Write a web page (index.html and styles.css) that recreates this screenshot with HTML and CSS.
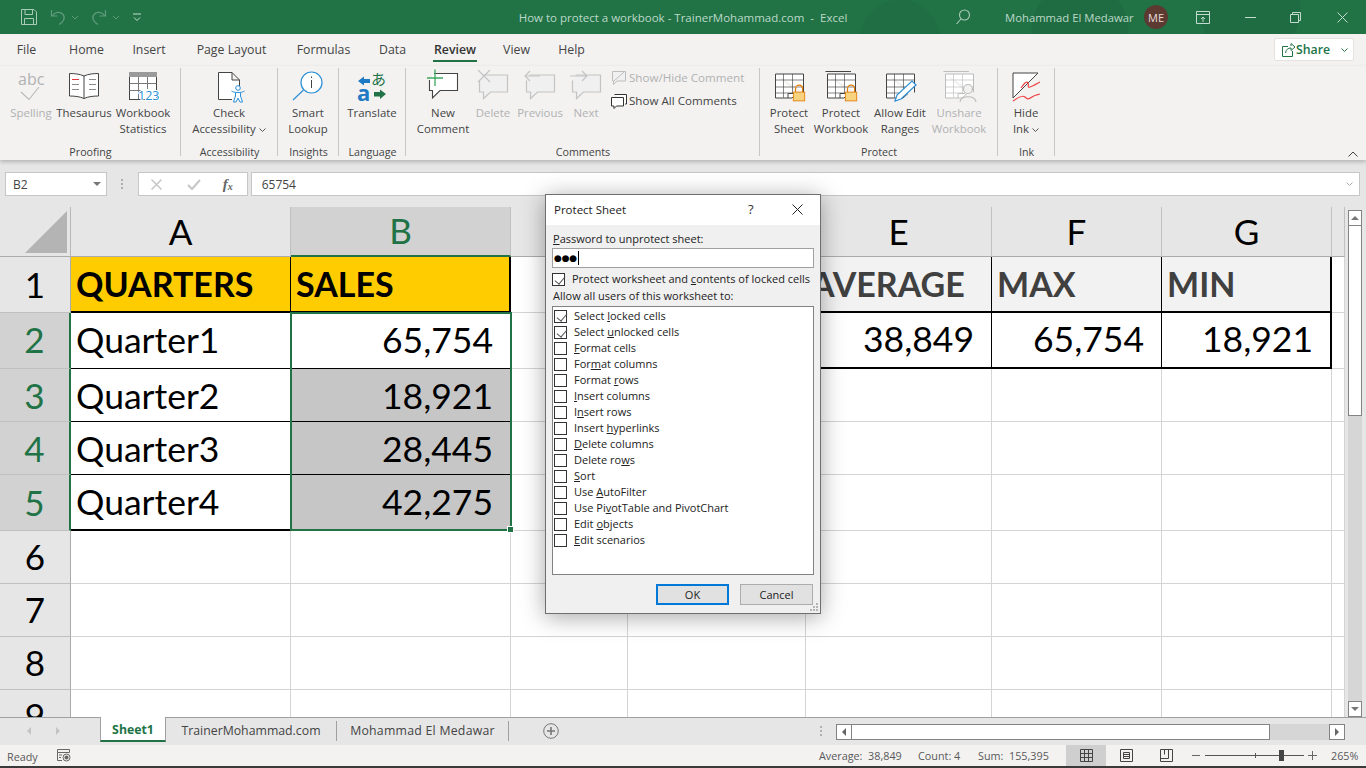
FILE: index.html
```html
<!DOCTYPE html>
<html lang="en">
<head>
<meta charset="utf-8">
<title>How to protect a workbook - TrainerMohammad.com - Excel</title>
<link rel="stylesheet" href="styles.css">
</head>
<body>
<svg class="defs" width="0" height="0">
  <symbol id="ws" viewBox="0 0 36 36">
    <path d="M4.500 5.500H32.500V24M4.500 5.500V29.500H21L26 25" fill="#fff" stroke="currentColor"/>
    <path d="M4.500 11.500H32.500M4.500 18.500H32.500M4.500 24.500H22M12.500 5.500V29M21.500 5.500V25" fill="none" stroke="currentColor" opacity=".65"/>
    <path d="M17 29.500V25H24" fill="none" stroke="currentColor"/>
  </symbol>
  <symbol id="lock" viewBox="0 0 16 22">
    <path d="M4 10V6a4 4 0 0 1 8 0v4" fill="none" stroke="#e47d08" stroke-width="1.300"/>
    <rect x="1.500" y="10" width="13" height="10" fill="#f8d37f" stroke="#e47d08"/>
  </symbol>
  <symbol id="bub" viewBox="0 0 36 36">
    <path d="M7.500 6.500H32.500V23.500H15.500L8.500 30V23.500H4.500V12" fill="#f0f0f0" stroke="#c4c4c4" stroke-width="1.200"/>
  </symbol>
</svg>

<header class="titlebar">
  <div class="qat">
    <svg width="18" height="18" viewBox="0 0 18 18" class="qat-save"><path d="M1.500 1.500H14L16.500 4V16.500H1.500ZM5 1.500V6.500H12.500V1.500M4.500 16.500V10.500H13.500V16.500" fill="none" stroke="#a9cbb7"/></svg>
    <svg width="16" height="18" viewBox="0 0 16 18" class="qat-undo"><path d="M1.500 2V8H7.500M2 8C5 4 10 3 13 6.500S13 14.500 9 16.500" fill="none" stroke="#5f9b7b" stroke-width="1.200"/></svg>
    <svg width="8" height="5" viewBox="0 0 8 5" class="qat-chev"><path d="M1 1L4 4L7 1" fill="none" stroke="#5f9b7b"/></svg>
    <svg width="16" height="18" viewBox="0 0 16 18" class="qat-redo"><path d="M14.500 2V8H8.500M14 8C11 4 6 3 3 6.500S3 14.500 7 16.500" fill="none" stroke="#5f9b7b" stroke-width="1.200"/></svg>
    <svg width="8" height="5" viewBox="0 0 8 5" class="qat-chev"><path d="M1 1L4 4L7 1" fill="none" stroke="#5f9b7b"/></svg>
    <svg width="8" height="8" viewBox="0 0 8 8" class="qat-more"><path d="M0 1H8M1 4.500L4 7.500L7 4.500" fill="none" stroke="#c4dccf"/></svg>
  </div>
  <div class="doc-title">How to protect a workbook - TrainerMohammad.com&nbsp; - &nbsp;Excel</div>
  <div class="winbar">
    <svg width="16" height="18" viewBox="0 0 16 18" class="win-search"><circle cx="9.500" cy="7" r="5" fill="none" stroke="#a9cbb7" stroke-width="1.100"/><path d="M6 11L1.500 16" stroke="#a9cbb7" stroke-width="1.100"/></svg>
    <span class="user">Mohammad El Medawar</span>
    <span class="avatar">ME</span>
    <svg width="14" height="13" viewBox="0 0 14 13" class="win-display"><path d="M.5 .5H13.500V12.500H.5ZM.5 3.500H13.500M7 11V6M5 8L7 6L9 8" fill="none" stroke="#c4dccf"/></svg>
    <svg width="11" height="1" viewBox="0 0 11 1" class="win-min"><path d="M0 .5H11" stroke="#c4dccf"/></svg>
    <svg width="11" height="11" viewBox="0 0 11 11" class="win-max"><path d="M.5 2.500H8.500V10.500H.5ZM2.500 2.500V.5H10.500V8.500H8.500" fill="none" stroke="#c4dccf"/></svg>
    <svg width="11" height="11" viewBox="0 0 11 11" class="win-close"><path d="M.5 .5L10.500 10.500M10.500 .5L.5 10.500" stroke="#c4dccf"/></svg>
  </div>
</header>

<nav class="tabs">
  <span class="tab t-file">File</span>
  <span class="tab t-home">Home</span>
  <span class="tab t-insert">Insert</span>
  <span class="tab t-page">Page Layout</span>
  <span class="tab t-formulas">Formulas</span>
  <span class="tab t-data">Data</span>
  <span class="tab t-review"><b>Review</b></span>
  <span class="tab t-view">View</span>
  <span class="tab t-help">Help</span>
  <span class="share">
    <svg width="16" height="16" viewBox="0 0 16 16"><path d="M8 4.500H2.500V14.500H12.500V9M5.500 11C6 7.500 8 6 11 6V8.500L15 5L11 1.500V4" fill="none" stroke="#217346" stroke-width="1"/></svg>
    <b>Share</b>
    <svg width="7" height="4" viewBox="0 0 7 4" class="share-chev"><path d="M.5 .5L3.500 3.500L6.500 .5" fill="none" stroke="#217346"/></svg>
  </span>
</nav>

<section class="ribbon">
  <div class="group g-proof">
    <div class="btns">
      <div class="btn w52 off">
        <svg class="ico" width="36" height="37" viewBox="0 0 36 37"><text x="5" y="17" class="abc">abc</text><path d="M8 24L16 31.500L26 19" fill="none" stroke="#b9b9b9" stroke-width="1.100"/></svg>
        <span>Spelling</span>
      </div>
      <div class="btn w54">
        <svg class="ico" width="36" height="37" viewBox="0 0 36 37"><path d="M18 8C14 6 8 5.500 3.500 5.500V28C8 28 14 28.500 18 30.500C22 28.500 28 28 32.500 28V5.500C28 5.500 22 6 18 8ZM18 8V30.500" fill="#fff" stroke="#444"/><path d="M6 11.500H13" stroke="#e8343c"/><path d="M6 16.500H13M6 21.500H13M23 11.500H30M23 16.500H30M23 21.500H30" stroke="#8a8a8a"/></svg>
        <span>Thesaurus</span>
      </div>
      <div class="btn w64">
        <svg class="ico" width="36" height="37" viewBox="0 0 36 37"><rect x="4.500" y="4.500" width="27" height="27" fill="#fff" stroke="#444"/><rect x="4" y="4" width="28" height="5" fill="#9a9a9a"/><path d="M4.500 15.500H31.500M4.500 22.500H16M13.500 9V31M22.500 9V21" fill="none" stroke="#777"/><text x="13" y="32" class="n123">123</text></svg>
        <span>Workbook<br>Statistics</span>
      </div>
    </div>
    <div class="glabel">Proofing</div>
  </div>
  <div class="group g-access">
    <div class="btns">
      <div class="btn w96">
        <svg class="ico" width="36" height="37" viewBox="0 0 36 37"><path d="M21 31.500H7.500V4.500H21L28.500 12V18M21 4.500V12H28.500" fill="#fff" stroke="#444"/><circle cx="27" cy="20" r="2.300" fill="#fff" stroke="#2b8fd6"/><path d="M20.500 23C23 25 31 25 33.500 23M24.500 25V28L22.500 34H25L27 30L29 34H31.500L29.500 28V25" fill="#fff" stroke="#2b8fd6"/></svg>
        <span>Check<br>Accessibility<svg class="chev" width="7" height="4" viewBox="0 0 7 4"><path d="M.5 .5L3.500 3.500L6.500 .5" fill="none" stroke="#555"/></svg></span>
      </div>
    </div>
    <div class="glabel">Accessibility</div>
  </div>
  <div class="group g-insight">
    <div class="btns">
      <div class="btn w60">
        <svg class="ico" width="36" height="37" viewBox="0 0 36 37"><circle cx="21.500" cy="14.500" r="10.500" fill="#fff" stroke="#2b8fd6" stroke-width="1.200"/><path d="M13.500 22L3 32" stroke="#2b8fd6" stroke-width="1.200"/><path d="M21.500 12V20M21.500 8.500V10" stroke="#444"/></svg>
        <span>Smart<br>Lookup</span>
      </div>
    </div>
    <div class="glabel">Insights</div>
  </div>
  <div class="group g-lang">
    <div class="btns">
      <div class="btn w66">
        <svg class="ico" width="36" height="37" viewBox="0 0 36 37"><path d="M4 13L10 8.500V11H16V15H10V17.500Z" fill="#1e7ac4"/><path d="M20 24H26V21.500L32 26L26 31V28.500H20Z" fill="#217346"/><text x="17" y="17" class="jp">あ</text><text x="3" y="32.500" class="aa">a</text></svg>
        <span>Translate</span>
      </div>
    </div>
    <div class="glabel">Language</div>
  </div>
  <div class="group g-comm">
    <div class="btns">
      <div class="btn w46">
        <svg class="ico" width="36" height="37" viewBox="0 0 36 37"><path d="M9 5.500H32.500V22.500H15L7.500 30V22.500H4.500V12" fill="#fff" stroke="#444" stroke-width="1.100"/><path d="M10 1.500V18M2 10H18" stroke="#3fa65f" stroke-width="1.300"/></svg>
        <span>New<br>Comment</span>
      </div>
      <div class="btn w46 ml4 off">
        <svg class="ico" width="36" height="37" viewBox="0 0 36 37"><use href="#bub"/><path d="M3 2L15 14M15 2L3 14" stroke="#c4c4c4" stroke-width="1.200"/></svg>
        <span>Delete</span>
      </div>
      <div class="btn w46 ml1 off">
        <svg class="ico" width="36" height="37" viewBox="0 0 36 37"><use href="#bub"/><path d="M18 8H3M8 3L3 8L8 13" fill="none" stroke="#c4c4c4" stroke-width="1.200"/></svg>
        <span>Previous</span>
      </div>
      <div class="btn w46 off">
        <svg class="ico" width="36" height="37" viewBox="0 0 36 37"><use href="#bub"/><path d="M2 8H19M14 3L19 8L14 13" fill="none" stroke="#c4c4c4" stroke-width="1.200"/></svg>
        <span>Next</span>
      </div>
      <div class="stack">
        <div class="small off">
          <svg width="17" height="16" viewBox="0 0 17 16"><path d="M1.500 1.500H14.500V11H6L2.500 14.500V11H1.500ZM3 11L13 2" fill="#f0f0f0" stroke="#bdbdbd"/></svg>
          <span>Show/Hide Comment</span>
        </div>
        <div class="small">
          <svg width="17" height="16" viewBox="0 0 17 16"><path d="M3.500 1.500H15.500V11H14M.5 4.500H12.500V13H5.500L3 15.500V13H.5Z" fill="#fff" stroke="#333"/></svg>
          <span>Show All Comments</span>
        </div>
      </div>
    </div>
    <div class="glabel">Comments</div>
  </div>
  <div class="group g-prot">
    <div class="btns">
      <div class="btn w50">
        <svg class="ico" width="36" height="37" viewBox="0 0 36 37"><use href="#ws" class="c-dark"/><use href="#lock" x="21" y="15" width="14" height="20"/></svg>
        <span>Protect<br>Sheet</span>
      </div>
      <div class="btn w54">
        <svg class="ico" width="36" height="37" viewBox="0 0 36 37"><path d="M2.500 3.500H28" fill="none" stroke="#444"/><use href="#ws" class="c-dark"/><use href="#lock" x="21" y="15" width="14" height="20"/></svg>
        <span>Protect<br>Workbook</span>
      </div>
      <div class="btn w64">
        <svg class="ico" width="36" height="37" viewBox="0 0 36 37"><use href="#ws" class="c-dark"/><path d="M13 33L15 27L30 13L34 17L19 31Z" fill="#fff" stroke="#2b8fd6" stroke-width="1.200"/></svg>
        <span>Allow Edit<br>Ranges</span>
      </div>
      <div class="btn w54 off">
        <svg class="ico" width="36" height="37" viewBox="0 0 36 37"><path d="M2.500 3.500H28" fill="none" stroke="#bdbdbd"/><use href="#ws" class="c-off"/><circle cx="27" cy="21" r="4.500" fill="#f2f1f0" stroke="#bdbdbd" stroke-width="1.200"/><path d="M19 34C19 27 35 27 35 34" fill="#f2f1f0" stroke="#bdbdbd" stroke-width="1.200"/></svg>
        <span>Unshare<br>Workbook</span>
      </div>
    </div>
    <div class="glabel">Protect</div>
  </div>
  <div class="group g-ink">
    <div class="btns">
      <div class="btn w56">
        <svg class="ico" width="36" height="37" viewBox="0 0 36 37"><path d="M5 30V5H30L5 30" fill="#fff" stroke="#444"/><path d="M13 20C17 14 19 13 20 15S19 20 22 19 30 15 32 14M5 33C12 28 15 27 17 29S20 32 24 29 30 27 32 26" fill="none" stroke="#ee4444" stroke-width="1.200"/></svg>
        <span>Hide<br>Ink<svg class="chev" width="7" height="4" viewBox="0 0 7 4"><path d="M.5 .5L3.500 3.500L6.500 .5" fill="none" stroke="#555"/></svg></span>
      </div>
    </div>
    <div class="glabel">Ink</div>
  </div>
  <svg class="collapse" width="10" height="6" viewBox="0 0 10 6"><path d="M.5 5.500L5 1L9.500 5.500" fill="none" stroke="#444"/></svg>
</section>

<div class="fbar">
  <div class="namebox"><span>B2</span><svg width="8" height="4" viewBox="0 0 8 4"><path d="M0 0H8L4 4Z" fill="#777"/></svg></div>
  <div class="fdots"><i></i><i></i><i></i></div>
  <div class="fbtns">
    <svg width="11" height="11" viewBox="0 0 11 11"><path d="M.5 .5L10.500 10.500M10.500 .5L.5 10.500" stroke="#c6c6c6" stroke-width="1.500"/></svg>
    <svg width="14" height="11" viewBox="0 0 14 11"><path d="M1 6L5 10L13 1" fill="none" stroke="#c6c6c6" stroke-width="2"/></svg>
    <span class="fx">f<sub>x</sub></span>
  </div>
  <div class="finput">65754<svg width="7" height="4" viewBox="0 0 7 4"><path d="M.5 .5L3.500 3.500L6.500 .5" fill="none" stroke="#aaa"/></svg></div>
</div>

<main class="sheetwrap">
  <div class="grid">
    <div class="corner"><svg width="42" height="42" viewBox="0 0 42 42"><path d="M42 0V42H0Z" fill="#b4b4b4"/></svg></div>
    <div class="ch">A</div><div class="ch sel">B</div><div class="ch"></div><div class="ch"></div><div class="ch">E</div><div class="ch">F</div><div class="ch">G</div><div class="ch"></div>

    <div class="rh">1</div><div class="c hd gold">QUARTERS</div><div class="c hd gold rb">SALES</div><div class="c"></div><div class="c"></div><div class="c hd pale">AVERAGE</div><div class="c hd pale">MAX</div><div class="c hd pale rb">MIN</div><div class="c"></div>

    <div class="rh sel up">2</div><div class="c tx ln up">Quarter1</div><div class="c num ln up">65,754</div><div class="c"></div><div class="c"></div><div class="c num thick up">38,849</div><div class="c num thick up">65,754</div><div class="c num thick rb up">18,921</div><div class="c"></div>

    <div class="rh sel down">3</div><div class="c tx ln down">Quarter2</div><div class="c num ln grey down">18,921</div><div class="c"></div><div class="c"></div><div class="c"></div><div class="c"></div><div class="c"></div><div class="c"></div>

    <div class="rh sel down">4</div><div class="c tx ln down">Quarter3</div><div class="c num ln grey down">28,445</div><div class="c"></div><div class="c"></div><div class="c"></div><div class="c"></div><div class="c"></div><div class="c"></div>

    <div class="rh sel">5</div><div class="c tx ln thick">Quarter4</div><div class="c num ln thick grey">42,275</div><div class="c"></div><div class="c"></div><div class="c"></div><div class="c"></div><div class="c"></div><div class="c"></div>

    <div class="rh">6</div><div class="c"></div><div class="c"></div><div class="c"></div><div class="c"></div><div class="c"></div><div class="c"></div><div class="c"></div><div class="c"></div>
    <div class="rh">7</div><div class="c"></div><div class="c"></div><div class="c"></div><div class="c"></div><div class="c"></div><div class="c"></div><div class="c"></div><div class="c"></div>
    <div class="rh">8</div><div class="c"></div><div class="c"></div><div class="c"></div><div class="c"></div><div class="c"></div><div class="c"></div><div class="c"></div><div class="c"></div>
    <div class="rh">9</div><div class="c"></div><div class="c"></div><div class="c"></div><div class="c"></div><div class="c"></div><div class="c"></div><div class="c"></div><div class="c"></div>

    <div class="selection"><span class="handle"></span></div>
  </div>
  <div class="vscroll">
    <div class="vbtn"><svg width="8" height="4" viewBox="0 0 8 4"><path d="M0 4H8L4 0Z" fill="#777"/></svg></div>
    <div class="vthumb"></div>
    <div class="vtrack"></div>
    <div class="vbtn"><svg width="8" height="4" viewBox="0 0 8 4"><path d="M0 0H8L4 4Z" fill="#777"/></svg></div>
  </div>
</main>

<div class="sheetbar">
  <div class="navs">
    <svg width="4" height="8" viewBox="0 0 4 8"><path d="M4 0V8L0 4Z" fill="#c4c4c4"/></svg>
    <svg width="4" height="8" viewBox="0 0 4 8"><path d="M0 0V8L4 4Z" fill="#c4c4c4"/></svg>
  </div>
  <div class="stab active">Sheet1</div>
  <div class="stab s2">TrainerMohammad.com</div>
  <div class="stab s3">Mohammad El Medawar</div>
  <svg class="plus" width="16" height="16" viewBox="0 0 16 16"><circle cx="8" cy="8" r="7.300" fill="none" stroke="#777"/><path d="M8 4V12M4 8H12" stroke="#777" stroke-width="1.600"/></svg>
  <div class="hdots"><i></i><i></i><i></i></div>
  <div class="hscroll">
    <div class="hbtn"><svg width="4" height="8" viewBox="0 0 4 8"><path d="M4 0V8L0 4Z" fill="#666"/></svg></div>
    <div class="hthumb"></div>
    <div class="htrack"></div>
    <div class="hbtn"><svg width="4" height="8" viewBox="0 0 4 8"><path d="M0 0V8L4 4Z" fill="#666"/></svg></div>
  </div>
</div>

<footer class="status">
  <span class="ready">Ready</span>
  <svg class="macro" width="14" height="13" viewBox="0 0 14 13"><path d="M.5 .5H12.500V3.500H.5ZM.5 3.500V11.500H5M2 6H5M2 8.500H4" fill="none" stroke="#666"/><circle cx="9.500" cy="8.500" r="3.500" fill="none" stroke="#666"/><circle cx="9.500" cy="8.500" r="2" fill="#666"/></svg>
  <span class="stat s-avg">Average:&nbsp; 38,849</span>
  <span class="stat s-count">Count: 4</span>
  <span class="stat s-sum">Sum:&nbsp; 155,395</span>
  <span class="view on"><svg width="13" height="13" viewBox="0 0 13 13"><path d="M.5 .5H12.500V12.500H.5ZM.5 4.500H12.500M.5 8.500H12.500M4.500 .5V12.500M8.500 .5V12.500" fill="none" stroke="#444"/></svg></span>
  <span class="view"><svg width="13" height="13" viewBox="0 0 13 13"><path d="M.5 .5H12.500V12.500H.5ZM3.500 3.500H9.500V9.500H3.500ZM3.500 5.500H9.500M3.500 7.500H9.500" fill="none" stroke="#444"/></svg></span>
  <span class="view"><svg width="13" height="13" viewBox="0 0 13 13"><path d="M.5 .5H12.500V12.500H.5ZM.5 9.500H8.500V.5M4.500 .5V5.500" fill="none" stroke="#444"/></svg></span>
  <div class="zoomer">
    <i class="zm"></i>
    <div class="zline"><i class="ztick"></i><i class="zthumb"></i></div>
    <i class="zp"></i>
  </div>
  <span class="pct">265%</span>
</footer>
<div class="bottomline"></div>

<div class="dialog">
  <div class="dtitle">
    <span class="dname">Protect Sheet</span>
    <span class="dq">?</span>
    <svg width="11" height="11" viewBox="0 0 11 11"><path d="M.5 .5L10.500 10.500M10.500 .5L.5 10.500" stroke="#222"/></svg>
  </div>
  <div class="dbody">
    <div class="dlabel"><u>P</u>assword to unprotect sheet:</div>
    <div class="pw">●●●<i></i></div>
    <div class="opt top"><span class="cb ck"></span><span class="otext">Protect worksheet and <u>c</u>ontents of locked cells</span></div>
    <div class="dlabel allow">Allow all users of this worksheet to:</div>
    <div class="list">
      <div class="opt"><span class="cb ck"></span><span class="otext">Select <u>l</u>ocked cells</span></div>
      <div class="opt"><span class="cb ck"></span><span class="otext">Select <u>u</u>nlocked cells</span></div>
      <div class="opt"><span class="cb"></span><span class="otext"><u>F</u>ormat cells</span></div>
      <div class="opt"><span class="cb"></span><span class="otext">For<u>m</u>at columns</span></div>
      <div class="opt"><span class="cb"></span><span class="otext">Format <u>r</u>ows</span></div>
      <div class="opt"><span class="cb"></span><span class="otext"><u>I</u>nsert columns</span></div>
      <div class="opt"><span class="cb"></span><span class="otext">I<u>n</u>sert rows</span></div>
      <div class="opt"><span class="cb"></span><span class="otext">Insert <u>h</u>yperlinks</span></div>
      <div class="opt"><span class="cb"></span><span class="otext"><u>D</u>elete columns</span></div>
      <div class="opt"><span class="cb"></span><span class="otext">Delete ro<u>w</u>s</span></div>
      <div class="opt"><span class="cb"></span><span class="otext"><u>S</u>ort</span></div>
      <div class="opt"><span class="cb"></span><span class="otext">Use <u>A</u>utoFilter</span></div>
      <div class="opt"><span class="cb"></span><span class="otext">Use Pi<u>v</u>otTable and PivotChart</span></div>
      <div class="opt"><span class="cb"></span><span class="otext">Edit <u>o</u>bjects</span></div>
      <div class="opt"><span class="cb"></span><span class="otext"><u>E</u>dit scenarios</span></div>
    </div>
    <div class="dfoot">
      <button class="dbtn ok">OK</button>
      <button class="dbtn">Cancel</button>
    </div>
    <svg class="grip" width="9" height="9" viewBox="0 0 9 9"><path d="M6 0h2v2H6zM3 3h2v2H3zM6 3h2v2H6zM0 6h2v2H0zM3 6h2v2H3zM6 6h2v2H6z" fill="#b5b5b5"/></svg>
  </div>
</div>
</body>
</html>
```
FILE: styles.css
```css
* { box-sizing: border-box; }
html, body { margin: 0; height: 100%; }
body {
  width: 1366px; height: 768px; overflow: hidden; position: relative;
  display: flex; flex-direction: column;
  font-family: "Open Sans", "Noto Sans", sans-serif;
  background: #e6e6e6; color: #444;
}
.defs { position: absolute; }
svg { display: block; flex: none; }
.c-dark { color: #444; }
.c-off { color: #bdbdbd; }

/* title bar */
.titlebar {
  height: 34px; flex: none; display: grid; grid-template-columns: 1fr auto 1fr; align-items: center;
  background-color: #217346;
  background-image:
    radial-gradient(circle at 900px 40px, #206f44 40px, transparent 41px),
    radial-gradient(circle at 1080px 30px, #1f6c42 48px, transparent 49px),
    radial-gradient(circle at 1250px 10px, #1f6c42 50px, transparent 51px);
  color: #bcd8c8;
}
.qat { display: flex; align-items: center; padding-left: 20px; }
.qat-undo { margin-left: 12px; }
.qat-chev { margin-left: 5px; }
.qat-redo { margin-left: 12px; }
.qat-more { margin-left: 13px; }
.doc-title { font-size: 11.500px; white-space: nowrap; }
.winbar { display: flex; align-items: center; justify-content: flex-end; font-size: 11.500px; padding-right: 18px; }
.user { margin-left: 34px; white-space: nowrap; color: #bcd8c8; width: 128px; font-size: 11.300px; }
.avatar {
  width: 24px; height: 24px; border-radius: 50%; background: #5c3a32; color: #e6dcd9;
  display: flex; align-items: center; justify-content: center; font-size: 11px; margin-left: 11px;
}
.win-display { margin-left: 28px; }
.win-min { margin-left: 35px; }
.win-max { margin-left: 34px; }
.win-close { margin-left: 36px; }

/* tabs */
.tabs { height: 32px; flex: none; display: flex; background: #f3f2f1; position: relative; font-size: 12.300px; }
.tab { display: flex; justify-content: center; padding-top: 7px; white-space: nowrap; position: relative; }
.tab b { font-weight: 600; color: #333; border-bottom: 2px solid #217346; height: 21px; padding: 0 1px; font-size: 12.300px; }
.t-file { width: 53px; } .t-home { width: 67px; } .t-insert { width: 58px; }
.t-page { width: 107px; } .t-formulas { width: 77px; } .t-data { width: 61px; }
.t-review { width: 64px; } .t-view { width: 59px; } .t-help { width: 51px; }
.share {
  margin: 4px 0 0 677px; width: 80px; height: 23px; background: #fff; border: 1px solid #e4e3e2; border-radius: 2px;
  display: flex; align-items: center; padding-left: 5px; color: #217346; font-size: 12.300px;
}
.share b { font-weight: 600; }
.share-chev { margin-left: 11px; }

/* ribbon */
.ribbon {
  height: 94px; flex: none; display: flex; background: #f3f2f1; padding-top: 2px; position: relative;
  box-shadow: 0 2px 4px rgba(0,0,0,.22); z-index: 2;
}
.group {
  display: flex; flex-direction: column; height: 92px; flex: none;
  background: linear-gradient(#c6c6c6, #c6c6c6) right top / 1px 88px no-repeat;
}
.g-proof { width: 181px; padding-left: 5px; }
.g-access { width: 97px; }
.g-insight { width: 61px; }
.g-lang { width: 67px; }
.g-comm { width: 354px; padding-left: 14px; }
.g-prot { width: 238px; padding-left: 4px; }
.g-ink { width: 57px; }
.g-proof .glabel { margin-left: -5px; }
.g-comm .glabel { margin-left: -14px; }
.g-prot .glabel { margin-left: -4px; }
.btns { display: flex; height: 76px; }
.btn {
  display: flex; flex-direction: column; align-items: center; text-align: center;
  font-size: 11.400px; line-height: 16px; white-space: nowrap;
}
.btn span { display: block; }
.ico { height: 37px; }
.off { color: #b1b1b1; }
.w46 { width: 46px; } .w50 { width: 50px; } .w52 { width: 52px; } .w54 { width: 54px; } .w56 { width: 56px; }
.w60 { width: 60px; } .w64 { width: 64px; } .w66 { width: 66px; } .w96 { width: 96px; }
.ml4 { margin-left: 4px; } .ml1 { margin-left: 1px; }
.chev { display: inline-block; margin-left: 3px; vertical-align: middle; }
.abc { font-size: 16px; fill: #b1b1b1; font-family: "Open Sans", sans-serif; }
.n123 { font-size: 12.500px; fill: #2b8fd6; font-family: "Open Sans", sans-serif; paint-order: stroke; stroke: #fff; stroke-width: 2px; }
.jp { font-size: 15px; fill: #217346; font-family: "Noto Sans CJK JP", sans-serif; }
.aa { font-size: 22px; fill: #1e7ac4; font-weight: 700; font-family: "Open Sans", sans-serif; }
.stack { display: flex; flex-direction: column; margin: -2px 0 0 2px; }
.small { display: flex; align-items: center; gap: 1px; height: 23px; font-size: 11.600px; white-space: nowrap; }
.glabel { text-align: center; font-size: 10.700px; line-height: 16px; height: 16px; white-space: nowrap; }
.collapse { position: absolute; right: 8px; top: 85px; }

/* formula bar */
.fbar { height: 47px; flex: none; display: flex; padding: 12px 6px 11px 5px; background: #e6e6e6; }
.namebox, .fbtns, .finput { background: #fff; border: 1px solid #c6c6c6; height: 24px; display: flex; align-items: center; }
.namebox { width: 102px; padding: 0 5px 0 7px; justify-content: space-between; font-size: 12px; }
.fdots { width: 31px; display: flex; flex-direction: column; align-items: center; justify-content: center; gap: 2px; }
.fdots i, .hdots i { width: 2px; height: 2px; background: #b0b0b0; display: block; }
.fbtns { width: 110px; padding-left: 12px; gap: 25px; }
.fx { font-family: "Liberation Serif", serif; font-style: italic; font-size: 15px; color: #666; margin-left: -3px; font-weight: 700; }
.fx sub { font-size: 10px; vertical-align: -1px; }
.finput { margin-left: 3px; width: 1111px; padding: 0 6px 0 10px; justify-content: space-between; font-size: 12px; }

/* sheet */
.sheetwrap { height: 510px; flex: none; display: flex; background: #e6e6e6; overflow: hidden; }
.grid {
  width: 1345px; height: 510px; position: relative; overflow: hidden; flex: none;
  display: grid;
  grid-template-columns: 71px 220px 220px 117px 178px 186px 170px 170px 13px;
  grid-template-rows: 50px 56px 56px 53px 53px 56px 53px 53px 53px 53px;
  font-family: Lato, "Open Sans", sans-serif; color: #000; background: #fff;
}
.corner { background: #e6e6e6; border-right: 1px solid #b8b8b8; border-bottom: 1px solid #ababab; display: flex; align-items: flex-end; justify-content: flex-end; padding: 0 3px 3px 0; }
.ch {
  background: #e6e6e6; border-right: 1px solid #c0c0c0; border-bottom: 1px solid #ababab;
  display: flex; align-items: center; justify-content: center; font-size: 35px; padding-bottom: 2px;
}
.ch.sel { background: #d2d2d2; color: #217346; border-bottom: 2px solid #217346; }
.rh {
  background: #e6e6e6; border-right: 1px solid #ababab; border-bottom: 1px solid #c0c0c0;
  display: flex; align-items: center; justify-content: center; font-size: 35px; padding-bottom: 2px;
}
.rh.sel { background: #d2d2d2; color: #217346; border-right: 2px solid #217346; }
.c { border-right: 1px solid #d4d4d4; border-bottom: 1px solid #d4d4d4; display: flex; align-items: center; padding: 0 6px 1px 5px; font-size: 35.500px; white-space: nowrap; min-width: 0; }
.hd { font-weight: 700; font-size: 34px; border-right-color: #000; border-bottom: 2px solid #000; padding-bottom: 2px; }
.gold { background: #ffcc00; }
.pale { background: #f2f2f2; color: #404040; }
.rb { border-right: 2px solid #000; }
.num { justify-content: flex-end; padding-right: 17px; border-right-color: #000; }
.tx { border-right-color: #000; }
.ln { border-bottom-color: #000; }
.thick { border-bottom: 2px solid #000; }
.grey { background: #c6c6c6; }
.c.up { padding-bottom: 3px; }
.rh.up { padding-bottom: 3px; }
.c.down { padding-top: 1px; padding-bottom: 0; }
.rh.down { padding-bottom: 0; }
.selection { position: absolute; left: 290px; top: 105px; width: 222px; height: 219px; border: 2px solid #217346; pointer-events: none; }
.handle { position: absolute; right: -4px; bottom: -4px; width: 7px; height: 7px; background: #217346; border: 1px solid #fff; }

/* vertical scrollbar */
.vscroll { width: 21px; display: flex; flex-direction: column; padding: 3px 4px 0 3px; }
.vbtn { height: 16px; background: #fff; border: 1px solid #838383; display: flex; align-items: center; justify-content: center; flex: none; }
.vthumb { height: 190px; background: #fff; border: 1px solid #838383; border-top: 0; flex: none; }
.vtrack { flex: 1; background: #d6d6d6; }

/* sheet tabs */
.sheetbar { height: 28px; flex: none; position: relative; display: flex; background: #e6e6e6; border-top: 1px solid #a0a0a0; font-size: 12.300px; }
.navs { width: 100px; display: flex; gap: 25px; padding: 9px 0 0 27px; }
.stab { display: flex; align-items: center; justify-content: center; height: 24px; padding-top: 1px; white-space: nowrap; }
.active { width: 66px; height: 25px; background: #fff; color: #217346; font-weight: 700; border-bottom: 2px solid #217346; border-left: 1px solid #a0a0a0; border-right: 1px solid #a0a0a0; margin-top: -1px; font-size: 12.300px; }
.s2 { width: 171px; border-right: 1px solid #a0a0a0; height: 20px; margin-top: 3px; padding: 0 0 2px; }
.s3 { width: 172px; border-right: 1px solid #a0a0a0; height: 20px; margin-top: 3px; padding: 0 0 2px; letter-spacing: .25px; }
.plus { margin: 5px 0 0 34px; }
.hdots { margin: 8px 0 0 261px; width: 2px; display: flex; flex-direction: column; gap: 2px; }
.hscroll { position: absolute; left: 836px; top: 6px; width: 509px; height: 16px; display: flex; background: #d6d6d6; }
.hbtn { width: 16px; background: #fff; border: 1px solid #838383; display: flex; align-items: center; justify-content: center; flex: none; }
.hthumb { width: 418px; background: #fff; border: 1px solid #838383; border-left: 0; flex: none; }
.htrack { flex: 1; background: #d6d6d6; }

/* status bar */
.status { height: 21px; flex: none; display: flex; align-items: center; background: #f3f2f1; font-size: 10.800px; color: #595959; white-space: nowrap; }
.ready { margin-left: 7px; width: 50px; padding-top: 1px; }
.macro { width: 14px; }
.stat { flex: none; }
.s-avg { margin-left: 748px; width: 99px; }
.s-count { width: 60px; }
.s-sum { width: 88px; }
.view { width: 40px; height: 21px; display: flex; align-items: center; justify-content: center; flex: none; }
.view.on { background: #cfcfcf; }
.zoomer { display: flex; align-items: center; margin-left: 6px; width: 125px; }
.zm { width: 8px; height: 1px; background: #666; }
.zp { width: 9px; height: 9px; margin-left: 4px; background: linear-gradient(#666,#666) center / 9px 1px no-repeat, linear-gradient(#666,#666) center / 1px 9px no-repeat; }
.zline { width: 100px; height: 1px; background: #555; margin-left: 5px; position: relative; }
.ztick { position: absolute; left: 50px; top: -2px; width: 1px; height: 5px; background: #555; }
.zthumb { position: absolute; left: 74px; top: -5px; width: 5px; height: 11px; background: #444; }
.pct { margin-left: 14px; }
.bottomline { height: 2px; flex: none; background: #3a3a3a; }

/* dialog */
.dialog {
  position: absolute; left: 545px; top: 194px; width: 276px; height: 420px; z-index: 5;
  border: 1px solid #6f6f6f; background: #f0f0f0; box-shadow: 0 3px 22px rgba(0,0,0,.35);
  display: flex; flex-direction: column; font-size: 11px; color: #222;
}
.dtitle { height: 30px; flex: none; background: #fff; display: flex; align-items: center; padding: 0 0 2px 8px; }
.dname { font-size: 11.500px; width: 194px; }
.dq { font-size: 13px; width: 44px; color: #333; }
.dbody { flex: 1; padding: 6px 6px 0 6px; position: relative; }
.dlabel { height: 17px; line-height: 15px; white-space: nowrap; padding-left: 1px; }
.pw { height: 20px; width: 262px; background: #fff; border: 1px solid #a0a0a0; display: flex; align-items: center; padding-left: 1px; font-size: 9px; line-height: 1; font-family: "DejaVu Sans", sans-serif; letter-spacing: -.2px; color: #000; }
.pw i { width: 1px; height: 14px; background: #000; margin-left: 1px; }
.opt { display: flex; align-items: center; gap: 7px; height: 16px; white-space: nowrap; }
.otext { margin-top: -2px; }
.opt.top { margin-top: 4px; height: 14px; }
.allow { margin-top: 2px; height: 18px; line-height: 16px; }
.list { width: 262px; height: 269px; background: #fff; border: 1px solid #828282; padding: 1px 0 0 1px; }
.cb { width: 13px; height: 13px; border: 1px solid #333; background: #fff; position: relative; flex: none; }
.cb.ck::after {
  content: ""; position: absolute; top: 0; left: 3.500px; width: 5px; height: 9px;
  border: solid #555; border-width: 0 1.300px 1.300px 0; transform: rotate(40deg);
}
.dfoot { display: flex; justify-content: flex-end; gap: 11px; padding: 9px 1px 0 0; }
.dbtn { width: 73px; height: 21px; padding: 0; background: #e1e1e1; border: 1px solid #adadad; font: inherit; color: #222; }
.dbtn.ok { border: 2px solid #0078d7; }
.grip { position: absolute; right: 1px; bottom: 1px; }
```
